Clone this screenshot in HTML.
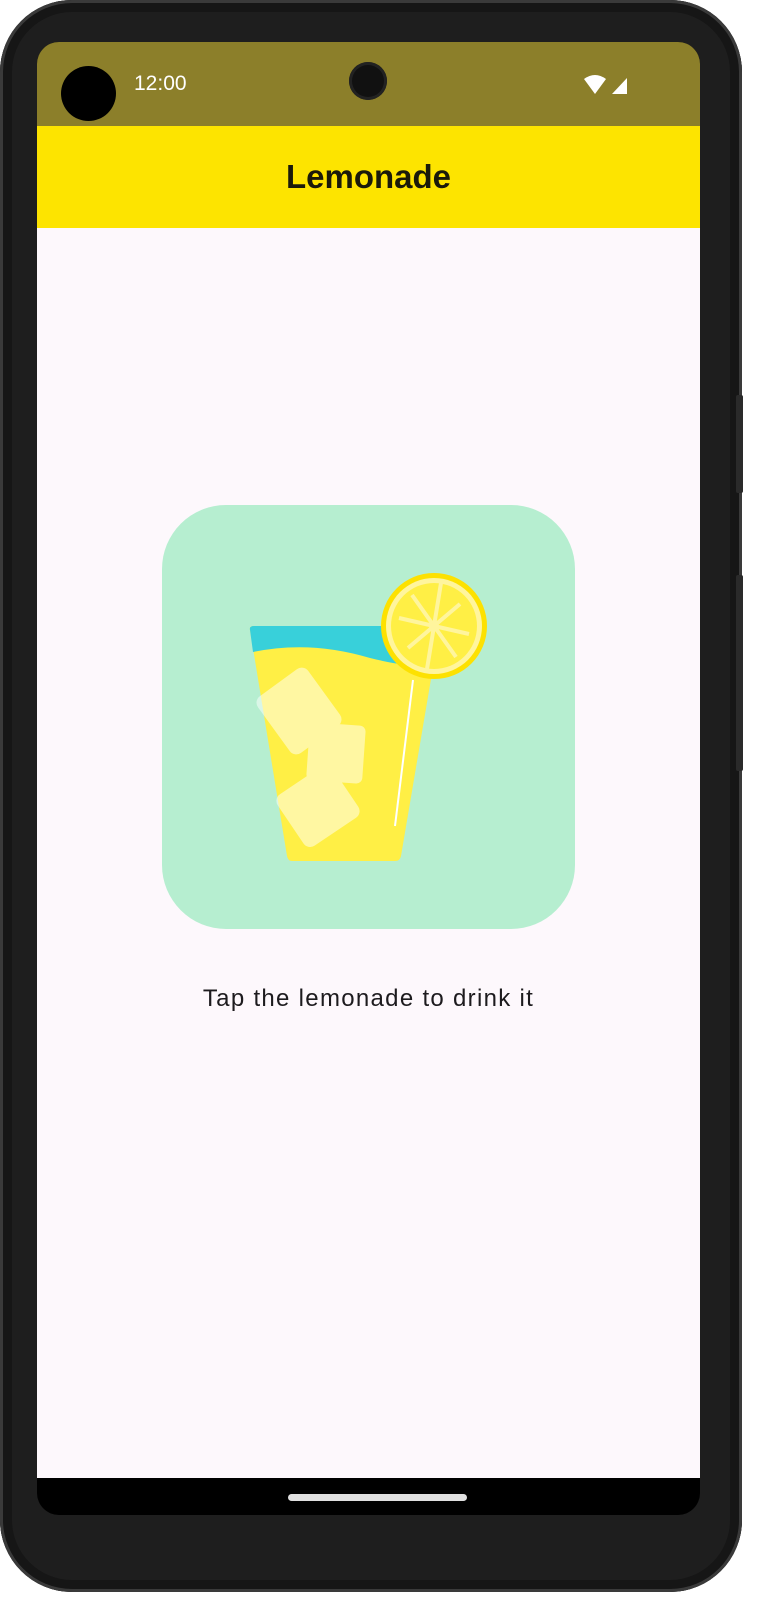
<!DOCTYPE html>
<html><head><meta charset="utf-8"><style>
html,body{margin:0;padding:0;width:758px;height:1600px;background:#fff;overflow:hidden;font-family:"Liberation Sans",sans-serif}
.phone{position:absolute;left:0;top:0;width:742px;height:1592px;background:#1e1e1e;border-radius:72px;box-shadow:inset 0 0 0 3px #3a3a3a,inset 0 0 0 12px #161616}
.btn{position:absolute;left:736px;width:7px;background:#2a2a2a;border-radius:2px}
.screen{position:absolute;left:37px;top:42px;width:663px;height:1473px;background:#000;border-radius:22px;overflow:hidden}
.status{position:absolute;left:0;top:0;width:663px;height:84px;background:#8c7f2a}
.appbar{position:absolute;left:0;top:84px;width:663px;height:102px;background:#fde400}
.content{position:absolute;left:0;top:186px;width:663px;height:1250px;background:#fdf8fc}
.title{position:absolute;left:0;width:663px;top:116px;text-align:center;font-weight:bold;font-size:33px;color:#1a1a0a}
.time{position:absolute;left:97px;top:30px;color:#fff;font-size:21px}
.card{position:absolute;left:125px;top:463px;width:413px;height:424px;background:#b6eed0;border-radius:64px}
.caption{position:absolute;left:0;width:663px;top:943px;text-align:center;font-size:24px;color:#1d1b1e;letter-spacing:1.3px}
.home{position:absolute;left:251px;top:1452px;width:179px;height:7px;background:#e0e0e0;border-radius:4px}
</style></head><body>
<div class="phone"></div>
<div class="btn" style="top:395px;height:98px"></div>
<div class="btn" style="top:575px;height:196px"></div>
<div class="screen">
 <div class="status"></div>
 <div style="position:absolute;left:24px;top:24px;width:55px;height:55px;border-radius:50%;background:#000"></div>
 <div style="position:absolute;left:312px;top:20px;width:38px;height:38px;border-radius:50%;background:#111;box-shadow:inset 0 0 0 3px #222"></div>
 <div class="time">12:00</div>
 <svg style="position:absolute;left:547px;top:32px" width="44" height="22" viewBox="0 0 44 22"><path d="M0 5 Q11 -3 22 5 L11 20 Z" fill="#fff"/><path d="M28 20 L43 4 L43 20 Z" fill="#fff"/></svg>
 <div class="appbar"></div>
 <div class="title">Lemonade</div>
 <div class="content"></div>
 <div class="card"></div>
 <svg style="position:absolute;left:0;top:0" width="663" height="1000" viewBox="37 42 663 1000">
  <path d="M250 630 Q249 626 254 626 L440 626 L401 856 Q400 861 395 861 L292 861 Q288 861 287 856 Z" fill="#ffef45"/>
  <path d="M250 630 Q249 626 254 626 L440 626 L436 666 Q410 668 370 658 Q310 640 253 652 Z" fill="#38d0da"/>
  <g fill="#fff" opacity=".5">
   <rect x="268" y="676" width="62" height="70" rx="8" transform="rotate(-36 299 711)"/>
   <rect x="308" y="724" width="56" height="58" rx="6" transform="rotate(4 336 753)"/>
   <rect x="285" y="775" width="66" height="62" rx="8" transform="rotate(-34 318 806)"/>
  </g>
  <path d="M413 680 L395 826" stroke="#fff" stroke-width="2"/>
  <circle cx="434" cy="626" r="53" fill="#fde100"/>
  <circle cx="434" cy="626" r="48" fill="#fff59d"/>
  <circle cx="434" cy="626" r="43" fill="#ffef45"/>
  <g stroke="#fff59d" stroke-width="4">
   <path d="M441 583 L427 669 M399 618 L469 634 M412 595 L456 657 M408 648 L460 604"/>
  </g>
  <circle cx="434" cy="626" r="5" fill="#fff59d"/>
 </svg>
 <div class="caption">Tap the lemonade to drink it</div>
 <div class="home"></div>
</div>
</body></html>
